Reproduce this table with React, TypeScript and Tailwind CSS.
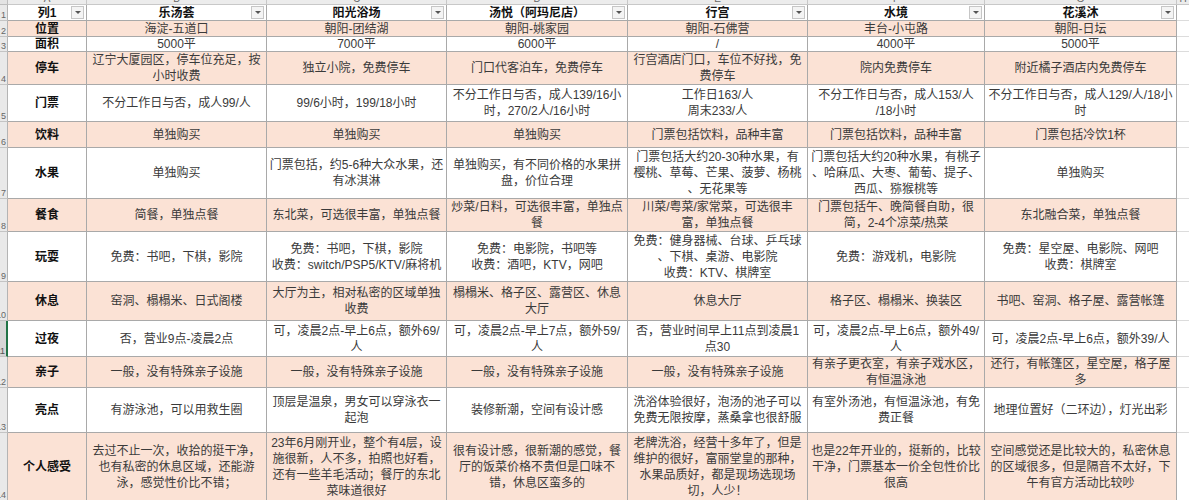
import React from "react"

type Cell = string | string[]

const cols = ["乐汤荟", "阳光浴场", "汤悦（阿玛尼店）", "行宫", "水境", "花溪沐"]
const letters = ["A", "B", "C", "D", "E", "F", "G"]

const rows: { label: string; cells: Cell[] }[] = [
  { label: "位置", cells: ["海淀-五道口", "朝阳-团结湖", "朝阳-姚家园", "朝阳-石佛营", "丰台-小屯路", "朝阳-日坛"] },
  { label: "面积", cells: ["5000平", "7000平", "6000平", "/", "4000平", "5000平"] },
  {
    label: "停车",
    cells: [
      ["辽宁大厦园区，停车位充足，按", "小时收费"],
      "独立小院，免费停车",
      "门口代客泊车，免费停车",
      ["行宫酒店门口，车位不好找，免", "费停车"],
      "院内免费停车",
      "附近橘子酒店内免费停车",
    ],
  },
  {
    label: "门票",
    cells: [
      "不分工作日与否，成人99/人",
      "99/6小时，199/18小时",
      ["不分工作日与否，成人139/16小", "时，270/2人/16小时"],
      ["工作日163/人", "周末233/人"],
      ["不分工作日与否，成人153/人", "/18小时"],
      ["不分工作日与否，成人129/人/18小", "时"],
    ],
  },
  { label: "饮料", cells: ["单独购买", "单独购买", "单独购买", "门票包括饮料，品种丰富", "门票包括饮料，品种丰富", "门票包括冷饮1杯"] },
  {
    label: "水果",
    cells: [
      "单独购买",
      ["门票包括，约5-6种大众水果，还", "有冰淇淋"],
      ["单独购买，有不同价格的水果拼", "盘，价位合理"],
      ["门票包括大约20-30种水果，有", "樱桃、草莓、芒果、菠萝、杨桃", "、无花果等"],
      ["门票包括大约20种水果，有桃子", "、哈麻瓜、大枣、葡萄、提子、", "西瓜、猕猴桃等"],
      "单独购买",
    ],
  },
  {
    label: "餐食",
    cells: [
      "简餐，单独点餐",
      "东北菜，可选很丰富，单独点餐",
      ["炒菜/日料，可选很丰富，单独点", "餐"],
      ["川菜/粤菜/家常菜，可选很丰", "富，单独点餐"],
      ["门票包括午、晚简餐自助，很", "简，2-4个凉菜/热菜"],
      "东北融合菜，单独点餐",
    ],
  },
  {
    label: "玩耍",
    cells: [
      "免费：书吧，下棋，影院",
      ["免费：书吧，下棋，影院", "收费：switch/PSP5/KTV/麻将机"],
      ["免费：电影院，书吧等", "收费：酒吧，KTV，网吧"],
      ["免费：健身器械、台球、乒乓球", "、下棋、桌游、电影院", "收费：KTV、棋牌室"],
      "免费：游戏机，电影院",
      ["免费：星空屋、电影院、网吧", "收费：棋牌室"],
    ],
  },
  {
    label: "休息",
    cells: [
      "窑洞、榻榻米、日式阁楼",
      ["大厅为主，相对私密的区域单独", "收费"],
      ["榻榻米、格子区、露营区、休息", "大厅"],
      "休息大厅",
      "格子区、榻榻米、换装区",
      "书吧、窑洞、格子屋、露营帐篷",
    ],
  },
  {
    label: "过夜",
    cells: [
      "否，营业9点-凌晨2点",
      ["可，凌晨2点-早上6点，额外69/", "人"],
      ["可，凌晨2点-早上7点，额外59/", "人"],
      ["否，营业时间早上11点到凌晨1", "点30"],
      ["可，凌晨2点-早上6点，额外49/", "人"],
      "可，凌晨2点-早上6点，额外39/人",
    ],
  },
  {
    label: "亲子",
    cells: [
      "一般，没有特殊亲子设施",
      "一般，没有特殊亲子设施",
      "一般，没有特殊亲子设施",
      "一般，没有特殊亲子设施",
      ["有亲子更衣室，有亲子戏水区，", "有恒温泳池"],
      ["还行，有帐篷区，星空屋，格子屋", "多"],
    ],
  },
  {
    label: "亮点",
    cells: [
      "有游泳池，可以用救生圈",
      ["顶层是温泉，男女可以穿泳衣一", "起泡"],
      "装修新潮，空间有设计感",
      ["洗浴体验很好，泡汤的池子可以", "免费无限按摩，蒸桑拿也很舒服"],
      ["有室外汤池，有恒温泳池，有免", "费正餐"],
      "地理位置好（二环边），灯光出彩",
    ],
  },
  {
    label: "个人感受",
    cells: [
      ["去过不止一次，收拾的挺干净，", "也有私密的休息区域，还能游", "泳，感觉性价比不错；"],
      ["23年6月刚开业，整个有4层，设", "施很新，人不多，拍照也好看，", "还有一些羊毛活动；餐厅的东北", "菜味道很好"],
      ["很有设计感，很新潮的感觉，餐", "厅的饭菜价格不贵但是口味不", "错，休息区蛮多的"],
      ["老牌洗浴，经营十多年了，但是", "维护的很好，富丽堂皇的那种，", "水果品质好，都是现场选现场", "切，人少！"],
      ["也是22年开业的，挺新的，比较", "干净，门票基本一价全包性价比", "很高"],
      ["空间感觉还是比较大的，私密休息", "的区域很多，但是隔音不太好，下", "午有官方活动比较吵"],
    ],
  },
]

function FilterButton() {
  return (
    <span className="absolute right-[2px] top-[1px] flex h-[13px] w-[13px] items-center justify-center border border-[#c6c6c6] bg-[#f4f4f4]">
      <span className="h-0 w-0 border-x-[3px] border-t-[3px] border-x-transparent border-t-[#555]" />
    </span>
  )
}

function Gutter({ n, selected }: { n: number; selected?: boolean }) {
  return (
    <div
      className={
        selected
          ? "flex items-end justify-end overflow-hidden border-b border-r-2 border-b-[#c4c4c4] border-r-[#217346] bg-[#d6d6d6] pr-[1px] text-[9px] leading-[10px] text-[#555]"
          : "flex items-end justify-end overflow-hidden border-b border-r border-b-[#c4c4c4] border-r-[#b4b4b4] bg-[#e9e9e9] pr-[1px] text-[9px] leading-[10px] text-[#666]"
      }
    >
      {n}
    </div>
  )
}

function Body({ value, peach }: { value: Cell; peach: boolean }) {
  const lines = Array.isArray(value) ? value : [value]
  return (
    <div
      className={`flex flex-col items-center justify-center overflow-visible border-b border-r border-[#a9a9a9] px-[2px] text-center text-[#3a3a3a] ${
        peach ? "bg-[#fbe2d5]" : "bg-white"
      }`}
    >
      {lines.map((l, i) => (
        <span key={i} className="whitespace-nowrap">
          {l}
        </span>
      ))}
    </div>
  )
}

export default function App() {
  return (
    <div className="min-h-screen w-[1189px] overflow-hidden bg-white">
      <div className="grid grid-cols-[8px_79px_180px_180px_181px_180px_177px_192px_1fr] grid-rows-[5px_16px_16px_15px_33px_37px_26px_51px_33px_50px_39px_36px_31px_45px_68px] font-['Liberation_Sans','Noto_Sans_CJK_SC',sans-serif] text-[12px] leading-[16px]">
        {/* column letters strip */}
        <div className="border-b border-r border-[#bdbdbd] bg-[#e3e3e3]" />
        {letters.map((l) => (
          <div key={l} className="flex justify-center overflow-hidden border-b border-r border-[#c8c8c8] bg-[#ececec] text-[10px] leading-[10px] text-[#666]">
            <span className="-mt-[6px]">{l}</span>
          </div>
        ))}
        <div className="flex justify-center overflow-hidden border-b border-[#c8c8c8] bg-[#ececec] text-[10px] leading-[10px] text-[#666]">
          <span className="-mt-[6px]">H</span>
        </div>

        {/* header row */}
        <Gutter n={1} />
        <div className="relative flex items-center justify-center border-b border-r border-[#a9a9a9] bg-white font-bold text-[#111]">
          列1
          <FilterButton />
        </div>
        {cols.map((c) => (
          <div key={c} className="relative flex items-center justify-center border-b border-r border-[#a9a9a9] bg-white font-bold text-[#111]">
            {c}
            <FilterButton />
          </div>
        ))}
        <div className="border-b border-[#dcdcdc] bg-white" />

        {rows.map((r, ri) => {
          const peach = ri % 2 === 0
          return (
            <React.Fragment key={r.label}>
              <Gutter n={ri + 2} selected={ri + 2 === 11} />
              <div
                className={`flex items-center justify-center border-b border-r border-[#a9a9a9] font-bold text-[#111] ${
                  peach ? "bg-[#fbe2d5]" : "bg-white"
                }`}
              >
                {r.label}
              </div>
              {r.cells.map((c, ci) => (
                <Body key={ci} value={c} peach={peach} />
              ))}
              <div className="border-b border-[#dcdcdc] bg-white" />
            </React.Fragment>
          )
        })}
      </div>
    </div>
  )
}
